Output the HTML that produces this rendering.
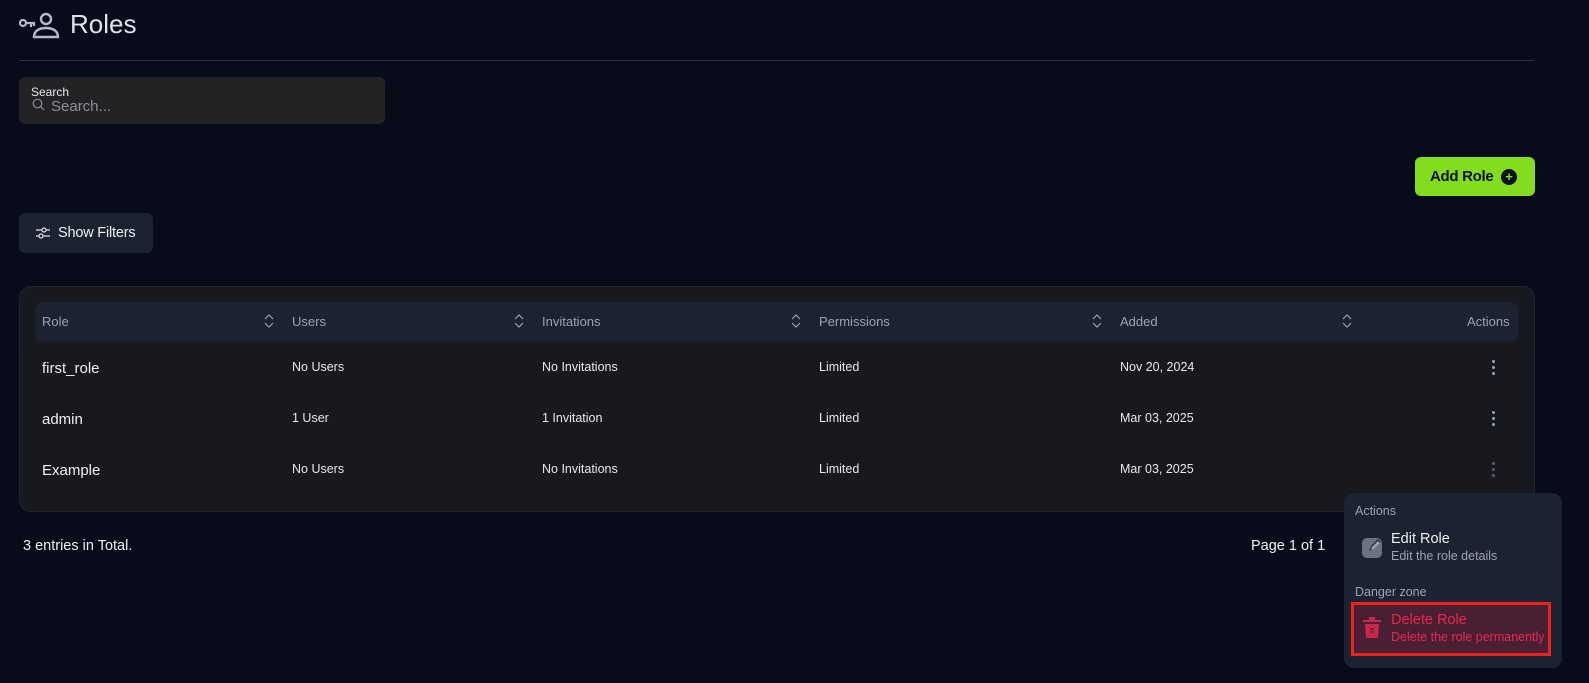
<!DOCTYPE html>
<html><head><meta charset="utf-8"><style>
*{box-sizing:border-box;margin:0;padding:0}
body{width:1589px;height:683px;background:#070b1a;font-family:"Liberation Sans",sans-serif;color:#e6e8ee;position:relative;overflow:hidden}
.a{position:absolute}
.th{position:absolute;top:314px;font-size:13px;color:#9aa3b5}
.td{position:absolute;font-size:12.5px;color:#e6e8ee}
.rn{position:absolute;font-size:15px;color:#eef0f4}
.sort{position:absolute;top:314px}
.dots{position:absolute;left:1492px;width:4px}
.dots i{display:block;width:3px;height:3px;border-radius:50%;background:#9aa3b5;margin-bottom:3px}
</style></head><body>
<svg class="a" style="left:18px;top:11px" width="42" height="28" viewBox="0 0 42 28"><circle cx="5" cy="12" r="3" fill="none" stroke="#b5bac6" stroke-width="2.2"/><path d="M8 12h9M13 12v4M16 12v3" stroke="#b5bac6" stroke-width="2.2" fill="none"/><circle cx="28" cy="8" r="5" fill="none" stroke="#b5bac6" stroke-width="2.4"/><path d="M16 26c0-6 5-9 12-9s12 3 12 9z" fill="none" stroke="#b5bac6" stroke-width="2.4"/></svg>
<div class="a" style="left:70px;top:9px;font-size:26px;color:#dfe2ea">Roles</div>
<div class="a" style="left:19px;top:60px;width:1515px;height:1px;background:#2e3446"></div>
<div class="a" style="left:19px;top:77px;width:366px;height:47px;background:#232325;border-radius:6px"></div>
<div class="a" style="left:31px;top:85px;font-size:12px;color:#e6e8ee">Search</div>
<svg class="a" style="left:32px;top:98px" width="13" height="13" viewBox="0 0 13 13"><circle cx="5.5" cy="5.5" r="4.3" fill="none" stroke="#8a8f9a" stroke-width="1.2"/><path d="M8.5 8.5l3.5 3.5" stroke="#8a8f9a" stroke-width="1.2"/></svg>
<div class="a" style="left:51px;top:98px;font-size:15px;color:#8a8f9a">Search...</div>
<div class="a" style="left:1415px;top:157px;width:120px;height:39px;background:#84dc1f;border-radius:6px"></div>
<div class="a" style="left:1430px;top:168px;font-size:15px;font-weight:bold;color:#0c1020;letter-spacing:-0.3px">Add Role</div>
<div class="a" style="left:1501px;top:169px;width:16px;height:16px;border-radius:50%;background:#0c1020;color:#84dc1f;font-size:13px;line-height:16px;text-align:center;font-weight:bold">+</div>
<div class="a" style="left:19px;top:213px;width:134px;height:40px;background:#1b2230;border-radius:6px"></div>
<svg class="a" style="left:35px;top:225px" width="16" height="16" viewBox="0 0 16 16" fill="none" stroke="#dfe2ea" stroke-width="1.2"><path d="M1 5h6M11 5h4M1 11h3M8 11h7"/><circle cx="9" cy="5" r="2"/><circle cx="6" cy="11" r="2"/></svg>
<div class="a" style="left:58px;top:225px;font-size:14.5px;color:#eef0f4;letter-spacing:-0.2px">Show Filters</div>
<div class="a" style="left:19px;top:286px;width:1516px;height:226px;background:#18191f;border:1px solid #222430;border-radius:12px"></div>
<div class="a" style="left:35px;top:302px;width:1483px;height:40px;background:#1b2230;border-radius:8px"></div>
<div class="th" style="left:42px">Role</div><div class="th" style="left:292px">Users</div><div class="th" style="left:542px">Invitations</div><div class="th" style="left:819px">Permissions</div><div class="th" style="left:1120px">Added</div><div class="th" style="left:1467px">Actions</div>
<svg class="sort" style="left:264px" width="10" height="14" viewBox="0 0 10 14" fill="none" stroke="#9aa3b5" stroke-width="1.2"><path d="M1 5l4-4 4 4M1 9l4 4 4-4"/></svg>
<svg class="sort" style="left:514px" width="10" height="14" viewBox="0 0 10 14" fill="none" stroke="#9aa3b5" stroke-width="1.2"><path d="M1 5l4-4 4 4M1 9l4 4 4-4"/></svg>
<svg class="sort" style="left:791px" width="10" height="14" viewBox="0 0 10 14" fill="none" stroke="#9aa3b5" stroke-width="1.2"><path d="M1 5l4-4 4 4M1 9l4 4 4-4"/></svg>
<svg class="sort" style="left:1092px" width="10" height="14" viewBox="0 0 10 14" fill="none" stroke="#9aa3b5" stroke-width="1.2"><path d="M1 5l4-4 4 4M1 9l4 4 4-4"/></svg>
<svg class="sort" style="left:1342px" width="10" height="14" viewBox="0 0 10 14" fill="none" stroke="#9aa3b5" stroke-width="1.2"><path d="M1 5l4-4 4 4M1 9l4 4 4-4"/></svg>

<div class="rn" style="left:42px;top:360px">first_role</div><div class="td" style="left:292px;top:360px">No Users</div><div class="td" style="left:542px;top:360px">No Invitations</div><div class="td" style="left:819px;top:360px">Limited</div><div class="td" style="left:1120px;top:360px">Nov 20, 2024</div>
<div class="dots" style="top:360px"><i></i><i></i><i></i></div>
<div class="rn" style="left:42px;top:411px">admin</div><div class="td" style="left:292px;top:411px">1 User</div><div class="td" style="left:542px;top:411px">1 Invitation</div><div class="td" style="left:819px;top:411px">Limited</div><div class="td" style="left:1120px;top:411px">Mar 03, 2025</div>
<div class="dots" style="top:411px"><i></i><i></i><i></i></div>
<div class="rn" style="left:42px;top:462px">Example</div><div class="td" style="left:292px;top:462px">No Users</div><div class="td" style="left:542px;top:462px">No Invitations</div><div class="td" style="left:819px;top:462px">Limited</div><div class="td" style="left:1120px;top:462px">Mar 03, 2025</div>
<div class="dots" style="top:462px;opacity:.5"><i></i><i></i><i></i></div>

<div class="a" style="left:23px;top:538px;font-size:14.5px;color:#eef0f4">3 entries in Total.</div>
<div class="a" style="left:1251px;top:538px;font-size:14.5px;color:#eef0f4">Page 1 of 1</div>

<div class="a" style="left:1344px;top:493px;width:218px;height:175px;background:#1b2230;border-radius:10px"></div>
<div class="a" style="left:1355px;top:504px;font-size:12.5px;color:#9aa3b5">Actions</div>
<div class="a" style="left:1362px;top:538px;width:20px;height:20px;background:#6b7282;border-radius:5px"></div>
<svg class="a" style="left:1364px;top:536px" width="20" height="20" viewBox="0 0 20 20"><path d="M5 15l2-5 7-7 3 3-7 7z" fill="#2a303d"/><path d="M7 14l1-3 6-6 2 2-6 6z" fill="#9aa3b5"/></svg>
<div class="a" style="left:1391px;top:531px;font-size:14.5px;color:#eef0f4">Edit Role</div>
<div class="a" style="left:1391px;top:549px;font-size:12.5px;color:#9aa3b5">Edit the role details</div>
<div class="a" style="left:1355px;top:585px;font-size:12.5px;color:#9aa3b5">Danger zone</div>
<div class="a" style="left:1351px;top:602px;width:200px;height:54px;background:#4a1f33;border:3px solid #f0201c"></div>
<svg class="a" style="left:1361px;top:616px" width="22" height="24" viewBox="0 0 22 24"><rect x="2" y="4" width="18" height="2" fill="#c8284b"/><rect x="8" y="1" width="6" height="3" fill="#c8284b"/><path d="M4 8h14l-1 14H5z" fill="#c8284b"/><path d="M9 13h4M9 16h4" stroke="#4a1f33" stroke-width="1.2"/></svg>
<div class="a" style="left:1391px;top:612px;font-size:14.5px;color:#e8284f">Delete Role</div>
<div class="a" style="left:1391px;top:630px;font-size:12.5px;color:#e8284f">Delete the role permanently</div>
</body></html>
